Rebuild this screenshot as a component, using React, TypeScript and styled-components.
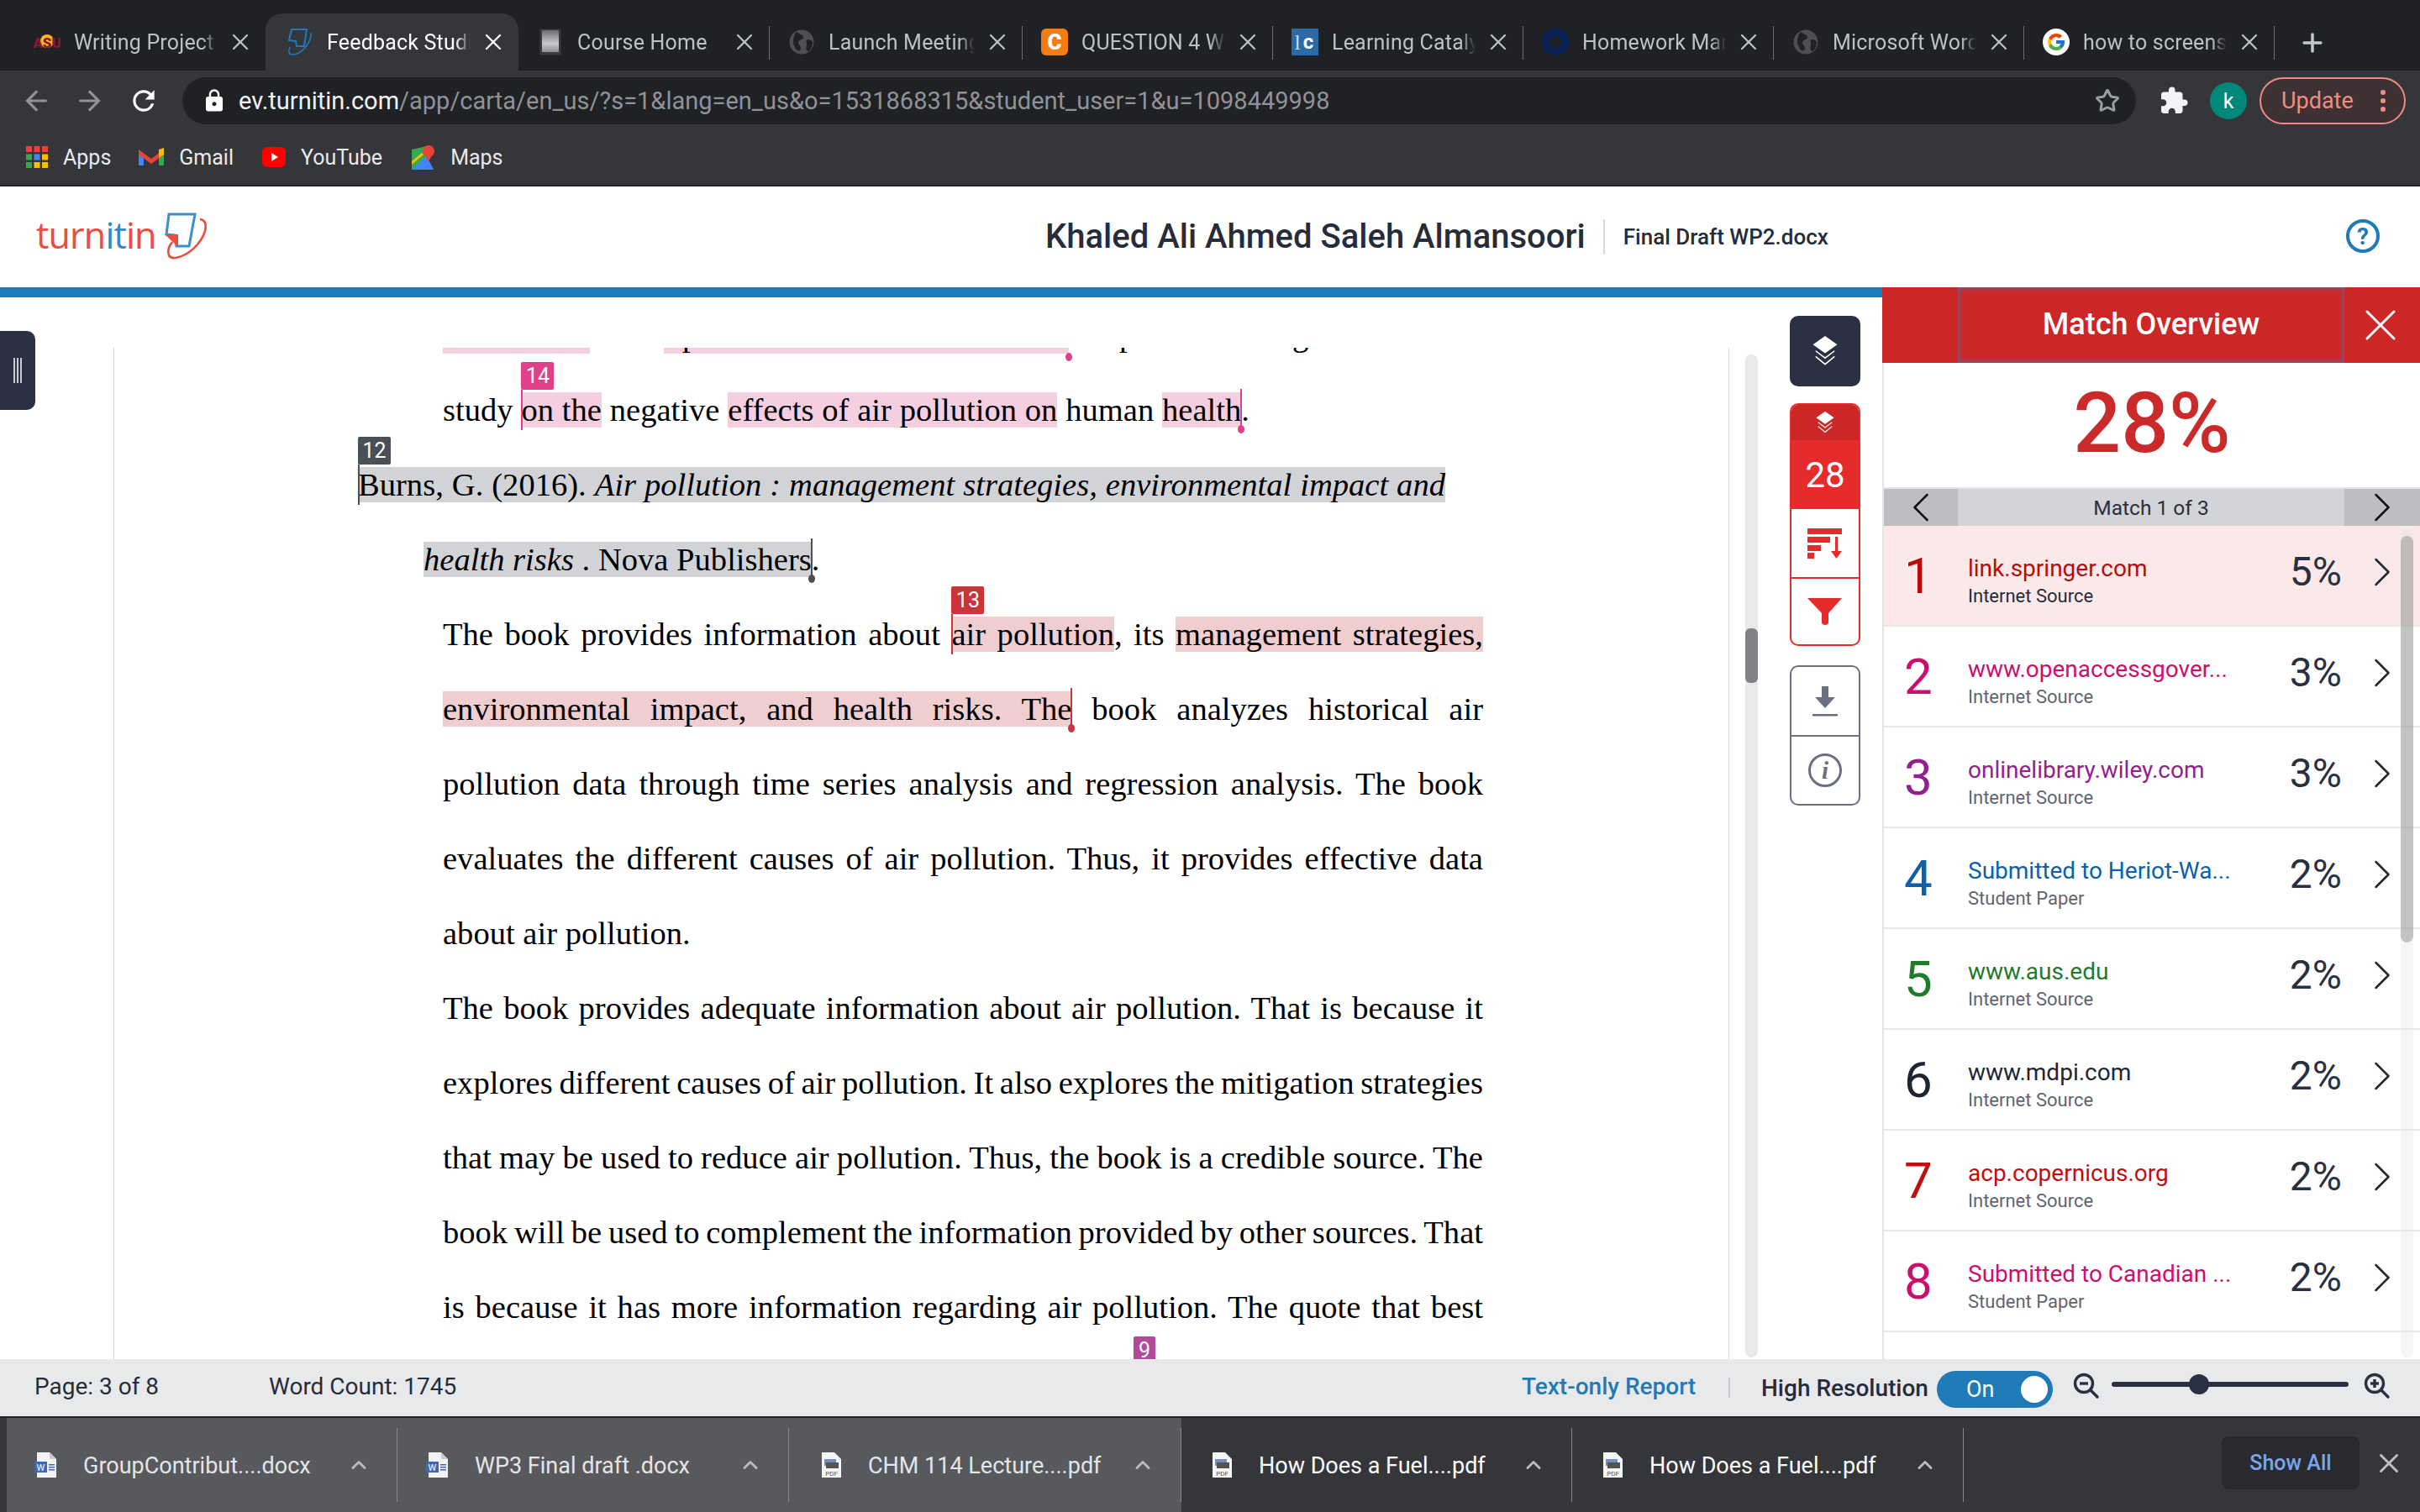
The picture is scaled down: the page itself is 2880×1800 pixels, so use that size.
import React from "react";
import styled, { createGlobalStyle } from "styled-components";
import { ChevronLeft, ChevronRight, ChevronUp, Plus, Star, X } from "lucide-react";
import { MdArrowBack, MdArrowForward, MdExtension, MdLock, MdRefresh } from "react-icons/md";
import { FcGoogle } from "react-icons/fc";

const GlobalStyle = createGlobalStyle`
    html, body {
        margin: 0;
        padding: 0;
        background: #ffffff;
    }
    * {
        box-sizing: border-box;
    }
`;

const Page = styled.div`
    width: 2880px;
    height: 1800px;
    display: flex;
    flex-direction: column;
    overflow: hidden;
    font-family: Roboto, "Liberation Sans", sans-serif;
    position: relative;
`;

/* browser chrome */
const TabStrip = styled.div`
    height: 84px;
    background: #202124;
    display: flex;
    align-items: flex-end;
    padding-left: 18px;
`;

const Tab = styled.div<{ $w?: number; $active?: boolean; $sep?: boolean }>`
    width: ${(p) => p.$w ?? 298}px;
    height: 68px;
    flex: none;
    display: flex;
    align-items: center;
    padding: 0 22px 0 ${(p) => (p.$active ? 25 : 22)}px;
    position: relative;
    color: ${(p) => (p.$active ? "#ffffff" : "#bdc1c6")};
    background: ${(p) => (p.$active ? "#35363a" : "transparent")};
    border-radius: ${(p) => (p.$active ? "20px 20px 0 0" : "0")};
    &::after {
        content: "";
        display: ${(p) => (p.$sep ? "block" : "none")};
        position: absolute;
        right: 0;
        top: 15px;
        width: 1px;
        height: 40px;
        background: #6a6c70;
    }
`;

const TabIcon = styled.div`
    width: 32px;
    height: 32px;
    flex: none;
    margin-right: 16px;
    display: flex;
    align-items: center;
    justify-content: center;
`;

const TabLabel = styled.div`
    flex: 1;
    min-width: 0;
    font-size: 25px;
    letter-spacing: 0.2px;
    white-space: nowrap;
    overflow: hidden;
    -webkit-mask-image: linear-gradient(to right, #000 84%, transparent 94%);
    mask-image: linear-gradient(to right, #000 84%, transparent 94%);
`;

const TabClose = styled(X)`
    width: 32px;
    height: 32px;
    flex: none;
    margin: 0 -8px 0 0;
`;

const NewTab = styled(Plus)`
    width: 34px;
    height: 34px;
    color: #c4c7cc;
    margin: 0 0 16px 28px;
`;

const Toolbar = styled.div`
    height: 64px;
    padding-top: 8px;
    background: #35363a;
    display: flex;
    align-items: flex-start;
`;

const NavIcons = styled.div`
    width: 217px;
    height: 56px;
    flex: none;
    display: flex;
    align-items: center;
    padding-left: 24px;
    gap: 26px;
    font-size: 38px;
    color: #909296;
    svg:last-child {
        color: #ffffff;
    }
`;

const UrlBar = styled.div`
    width: 2325px;
    height: 56px;
    flex: none;
    background: #202124;
    border-radius: 28px;
    display: flex;
    align-items: center;
    padding-left: 23px;
    font-size: 29px;
    color: #ffffff;
    svg {
        flex: none;
    }
`;

const UrlText = styled.div`
    margin-left: 14px;
    flex: 1;
    white-space: nowrap;
    color: #f1f3f4;
    span {
        color: #8f9296;
    }
`;

const StarIcon = styled(Star)`
    width: 30px;
    height: 30px;
    color: #9a9da1;
    margin-right: 19px;
`;

const ExtIcon = styled(MdExtension)`
    font-size: 36px;
    color: #f1f3f4;
    margin: 10px 0 0 27px;
    flex: none;
`;

const Avatar = styled.div`
    width: 44px;
    height: 44px;
    margin: 6px 0 0 25px;
    border-radius: 50%;
    background: #00897b;
    color: #ffffff;
    font-size: 25px;
    display: flex;
    align-items: center;
    justify-content: center;
    flex: none;
`;

const UpdatePill = styled.div`
    width: 174px;
    height: 56px;
    margin-left: 15px;
    flex: none;
    border: 2px solid #f28b82;
    border-radius: 28px;
    background: #3e3133;
    color: #f28b82;
    font-size: 27px;
    display: flex;
    align-items: center;
    padding-left: 24px;
    justify-content: space-between;
    padding-right: 22px;
`;

const Dots = styled.div`
    display: flex;
    flex-direction: column;
    gap: 4px;
    i {
        display: block;
        width: 6px;
        height: 6px;
        border-radius: 50%;
        background: #f28b82;
    }
`;

const Bookmarks = styled.div`
    height: 74px;
    background: #35363a;
    border-bottom: 2px solid #202124;
    display: flex;
    align-items: center;
    padding: 6px 0 0 31px;
    color: #e8eaed;
    font-size: 25px;
`;

const Bookmark = styled.div<{ $gap: number }>`
    display: flex;
    align-items: center;
    gap: 18px;
    margin-right: ${(p) => p.$gap}px;
`;

/* turnitin header */
const Header = styled.div`
    height: 120px;
    background: #ffffff;
    display: flex;
    align-items: center;
    position: relative;
`;

const Logo = styled.div`
    width: 1244px;
    flex: none;
    padding-left: 43px;
    display: flex;
    align-items: center;
`;

const LogoWord = styled.div`
    font-family: "Open Sans", sans-serif;
    font-size: 43px;
    font-weight: 500;
    letter-spacing: -0.8px;
    color: #ef4a3c;
    line-height: 1;
    margin-top: -6px;
    b {
        font-weight: 500;
        color: #2f8ac7;
    }
`;

const StudentName = styled.div`
    font-size: 40px;
    font-weight: 500;
    color: #262c3a;
    white-space: nowrap;
    margin-top: -2px;
`;

const PaperTitle = styled.div`
    font-size: 26px;
    font-weight: 500;
    color: #262c3a;
    margin-left: 21px;
    padding-left: 22px;
    height: 42px;
    line-height: 42px;
    border-left: 2px solid #d8dade;
`;

const HelpButton = styled.div`
    position: absolute;
    right: 48px;
    top: 39px;
    width: 40px;
    height: 40px;
    border: 4px solid #1e7bb8;
    border-radius: 50%;
    color: #1e7bb8;
    font-size: 28px;
    font-weight: 700;
    display: flex;
    align-items: center;
    justify-content: center;
`;

/* workspace */
const Workspace = styled.div`
    height: 1276px;
    display: flex;
`;

const LeftCol = styled.div`
    width: 2240px;
    flex: none;
    display: flex;
    flex-direction: column;
`;

const BlueStrip = styled.div`
    height: 12px;
    background: #1e7bb8;
    flex: none;
`;

const DocRow = styled.div`
    flex: 1;
    display: flex;
    min-height: 0;
    position: relative;
`;

const SideHandle = styled.div`
    position: absolute;
    left: 0;
    top: 40px;
    width: 42px;
    height: 94px;
    background: #2a3042;
    border-radius: 0 10px 10px 0;
    display: flex;
    justify-content: center;
    gap: 2px;
    padding: 32px 0 0 0;
    i {
        display: block;
        width: 2px;
        height: 30px;
        background: #c9ccd3;
    }
`;

const DocArea = styled.div`
    width: 2058px;
    flex: none;
    padding: 60px 0 0 135px;
`;

const DocViewport = styled.div`
    height: 100%;
    border-left: 1px solid #d5d6d9;
    border-right: 1px solid #d5d6d9;
    overflow: hidden;
    font-family: "Liberation Serif", "Times New Roman", serif;
    font-size: 38.6px;
    color: #000000;
`;

const DocScroll = styled.div`
    margin-top: -59px;
`;

const Line = styled.div<{ $x: number; $w?: number; $word?: number }>`
    height: 89px;
    line-height: 89px;
    margin-left: ${(p) => p.$x - 136}px;
    width: ${(p) => (p.$w ? `${p.$w}px` : "auto")};
    word-spacing: ${(p) => p.$word ?? 0}px;
    text-align: ${(p) => (p.$w ? "justify" : "left")};
    text-align-last: ${(p) => (p.$w ? "justify" : "left")};
`;

const NoBreak = styled.span`
    white-space: nowrap;
`;

const ClippedLine = styled.div`
    height: 89px;
    margin-left: 391px;
    display: flex;
    line-height: 89px;
`;

const ClipPiece = styled.div<{ $w: number; $pink?: boolean; $pad?: number }>`
    width: ${(p) => p.$w}px;
    height: 66px;
    flex: none;
    overflow: visible;
    padding-left: ${(p) => p.$pad ?? 0}px;
    background: ${(p) =>
        p.$pink ? "linear-gradient(#f5cfe0, #f5cfe0) left bottom / 100% 7px no-repeat" : "none"};
    position: relative;
`;

const ClipDot = styled.span`
    position: absolute;
    right: 0;
    bottom: -9px;
    width: 8px;
    height: 10px;
    margin-right: -4px;
    border-radius: 50%;
    background: #df4088;
`;

const Mark = styled.span<{ $tone: "pink" | "red" | "grey" }>`
    background: ${(p) =>
        p.$tone === "pink" ? "#f5cfe0" : p.$tone === "red" ? "#f0cdcf" : "#d1d3d6"};
    position: relative;
`;

const toneColor = { pink: "#df4088", red: "#cb343a", grey: "#4b4f57", purple: "#b04a9b" };

const Badge = styled.span<{ $tone: keyof typeof toneColor; $w?: number; $top?: number }>`
    position: absolute;
    left: 0;
    top: ${(p) => p.$top ?? -36}px;
    height: 33px;
    width: ${(p) => p.$w ?? 39}px;
    background: ${(p) => toneColor[p.$tone]};
    border-radius: 2px;
    color: #ffffff;
    font-family: Roboto, sans-serif;
    font-size: 25px;
    line-height: 33px;
    text-align: center;
    text-align-last: center;
    word-spacing: 0;
    &::after {
        content: "";
        position: absolute;
        left: 0;
        top: 33px;
        width: 2px;
        height: 48px;
        background: ${(p) => toneColor[p.$tone]};
    }
`;

const EndMark = styled.span<{ $tone: keyof typeof toneColor }>`
    display: inline-block;
    width: 0;
    height: 0;
    position: relative;
    &::before {
        content: "";
        position: absolute;
        left: -1px;
        top: -38px;
        width: 2px;
        height: 50px;
        background: ${(p) => toneColor[p.$tone]};
    }
    &::after {
        content: "";
        position: absolute;
        left: -4px;
        top: 5px;
        width: 8px;
        height: 10px;
        border-radius: 50%;
        background: ${(p) => toneColor[p.$tone]};
    }
`;

const Gutter = styled.div`
    flex: 1;
    display: flex;
    padding-left: 19px;
`;

const ScrollTrack = styled.div`
    width: 15px;
    flex: none;
    margin: 68px 0 2px;
    background: #e8e9eb;
    border-radius: 8px;
    padding-top: 326px;
`;

const ScrollThumb = styled.div`
    height: 65px;
    background: #808285;
    border-radius: 6px;
`;

const ToolColumn = styled.div`
    width: 84px;
    margin-left: 38px;
    padding-top: 22px;
    display: flex;
    flex-direction: column;
`;

const LayersButton = styled.div`
    height: 84px;
    background: #2a3042;
    border-radius: 10px;
    display: flex;
    align-items: center;
    justify-content: center;
    margin-bottom: 20px;
`;

const ToolGroup = styled.div<{ $color: string }>`
    border: 2px solid ${(p) => p.$color};
    border-radius: 10px;
    overflow: hidden;
    margin-bottom: 23px;
    background: #ffffff;
`;

const ToolCell = styled.div<{ $h: number; $bg?: string; $line?: string }>`
    height: ${(p) => p.$h}px;
    background: ${(p) => p.$bg ?? "transparent"};
    border-top: ${(p) => (p.$line ? `2px solid ${p.$line}` : "none")};
    display: flex;
    align-items: center;
    justify-content: center;
    color: #ffffff;
    font-size: 42px;
`;

/* match overview panel */
const Panel = styled.div`
    width: 640px;
    flex: none;
    display: flex;
    flex-direction: column;
    border-left: 2px solid #e4e5e7;
    position: relative;
`;

const PanelHead = styled.div`
    height: 90px;
    margin-left: -2px;
    background: #cb2727;
    flex: none;
    display: flex;
    align-items: center;
    padding-left: 90px;
`;

const PanelTitle = styled.div`
    width: 460px;
    height: 90px;
    line-height: 88px;
    text-align: center;
    color: #ffffff;
    font-size: 36px;
    font-weight: 500;
    box-shadow: inset 0 0 5px 2px rgba(80, 110, 170, 0.65);
`;

const PanelClose = styled(X)`
    width: 64px;
    height: 64px;
    color: #ffffff;
    margin-left: 11px;
    stroke-width: 1.1;
    flex: none;
`;

const BigScore = styled.div`
    height: 150px;
    flex: none;
    border-bottom: 2px solid #e4e5e7;
    text-align: center;
    color: #cb2a2a;
    font-size: 100px;
    font-weight: 500;
    line-height: 144px;
`;

const MatchNav = styled.div`
    height: 44px;
    flex: none;
    background: #d2d4d8;
    display: flex;
    align-items: center;
    color: #2a3040;
    font-size: 24.5px;
`;

const NavSide = styled.div<{ $w: number }>`
    width: ${(p) => p.$w}px;
    height: 44px;
    flex: none;
    background: #bcbec3;
    display: flex;
    align-items: center;
    justify-content: center;
    color: #111111;
    svg {
        flex: none;
    }
`;

const NavText = styled.div`
    flex: 1;
    text-align: center;
`;

const MatchList = styled.div`
    flex: 1;
    min-height: 0;
    position: relative;
    overflow: hidden;
`;

const MatchRow = styled.div<{ $active?: boolean }>`
    height: 120px;
    display: flex;
    align-items: center;
    padding: 0 35px 0 24px;
    border-bottom: 2px solid #e8e9eb;
    background: ${(p) => (p.$active ? "#fbe9e9" : "#ffffff")};
`;

const MatchNum = styled.div<{ $color: string }>`
    width: 76px;
    flex: none;
    font-size: 60px;
    color: ${(p) => p.$color};
`;

const MatchInfo = styled.div`
    flex: 1;
    min-width: 0;
    margin-top: 14px;
`;

const MatchName = styled.div<{ $color: string }>`
    font-size: 28px;
    color: ${(p) => p.$color};
    white-space: nowrap;
    line-height: 36px;
`;

const MatchType = styled.div<{ $active?: boolean }>`
    font-size: 22px;
    line-height: 30px;
    color: ${(p) => (p.$active ? "#262c3a" : "#5f6571")};
`;

const MatchPct = styled.div`
    font-size: 48px;
    color: #2a3040;
    margin-bottom: 10px;
`;

const MatchChevron = styled(ChevronRight)`
    width: 60px;
    height: 60px;
    margin: 0 -20px 8px 18px;
    color: #222733;
    stroke-width: 1;
    flex: none;
`;

const ListTrack = styled.div`
    position: absolute;
    right: 8px;
    top: 4px;
    bottom: 2px;
    width: 15px;
    border-radius: 8px;
    background: rgba(225, 225, 225, 0.35);
`;

const ListThumb = styled.div`
    position: absolute;
    right: 8px;
    top: 12px;
    height: 484px;
    width: 15px;
    border-radius: 8px;
    background: rgba(120, 120, 120, 0.4);
`;

/* status bar */
const StatusBar = styled.div`
    height: 68px;
    flex: none;
    background: #e8e9eb;
    display: flex;
    align-items: center;
    color: #262c3a;
    font-size: 28px;
    padding-left: 41px;
`;

const StatusText = styled.div<{ $w?: number }>`
    width: ${(p) => (p.$w ? `${p.$w}px` : "auto")};
    flex: none;
    white-space: nowrap;
    margin-bottom: 3px;
`;

const ReportLink = styled.div`
    margin-bottom: 3px;
    color: #1e7bb8;
    font-weight: 500;
    font-size: 28px;
    width: 246px;
    flex: none;
    white-space: nowrap;
`;

const StatusDivider = styled.div`
    width: 2px;
    height: 24px;
    background: #c8cacd;
    margin-right: 37px;
    flex: none;
`;

const StatusStrong = styled.div`
    font-weight: 500;
    font-size: 28px;
    width: 209px;
    flex: none;
    white-space: nowrap;
    margin-top: 1px;
`;

const Toggle = styled.div`
    width: 138px;
    height: 44px;
    flex: none;
    margin-top: 4px;
    background: #1e7bb8;
    border-radius: 22px;
    display: flex;
    align-items: center;
    color: #ffffff;
    font-size: 27px;
    padding: 0 6px 0 35px;
    justify-content: space-between;
`;

const ToggleKnob = styled.div`
    width: 32px;
    height: 32px;
    border-radius: 50%;
    background: #ffffff;
`;

const ZoomGap = styled.div`
    width: 24px;
    flex: none;
`;

const ZoomSlider = styled.div`
    width: 282px;
    height: 6px;
    border-radius: 3px;
    background: #2a3042;
    margin: -8px 18px 0 14px;
    flex: none;
    position: relative;
`;

const ZoomKnob = styled.div`
    position: absolute;
    left: 92px;
    top: -9px;
    width: 24px;
    height: 24px;
    border-radius: 50%;
    background: #2a3042;
`;

const ZoomGlyph = styled.svg`
    flex: none;
    margin-top: -4px;
`;

/* downloads shelf */
const Shelf = styled.div`
    height: 114px;
    flex: none;
    background: #35363a;
    border-top: 2px solid #202124;
    display: flex;
    padding-left: 8px;
    position: relative;
`;

const ShelfItem = styled.div<{ $hover?: boolean; $w: number; $pad: number }>`
    width: ${(p) => p.$w}px;
    flex: none;
    height: 112px;
    background: ${(p) => (p.$hover ? "#58595d" : "transparent")};
    display: flex;
    align-items: center;
    padding-left: ${(p) => p.$pad}px;
    position: relative;
    color: ${(p) => (p.$hover ? "#e4e5e7" : "#ffffff")};
    font-size: 27px;
    &::after {
        content: "";
        position: absolute;
        right: 0;
        top: 12px;
        width: 1px;
        height: 88px;
        background: #86878b;
    }
`;

const ShelfName = styled.div`
    margin: 2px 0 0 31px;
    flex: 1;
    white-space: nowrap;
`;

const ShelfCaret = styled(ChevronUp)`
    width: 28px;
    height: 28px;
    color: #b9babd;
    margin-right: 32px;
    flex: none;
`;

const ShowAll = styled.div`
    position: absolute;
    left: 2644px;
    top: 22px;
    width: 164px;
    height: 63px;
    background: #292a2d;
    border-radius: 8px;
    color: #7ba6ee;
    font-size: 25px;
    font-weight: 500;
    display: flex;
    align-items: center;
    justify-content: center;
`;

const ShelfClose = styled(X)`
    position: absolute;
    left: 2824px;
    top: 35px;
    width: 38px;
    height: 38px;
    color: #bfc0c2;
`;

const Globe = () => (
    <svg width="30" height="30" viewBox="0 0 30 30">
        <circle cx="15" cy="15" r="14.5" fill="#4d4f54" />
        <path d="M9 3c4 3 7 3 8 6s-5 3-6 6 3 4 3 7-2 4-4 3-5-6-5-11 2-9 4-11zM22 12c3 0 5 1 6 3 0 5-2 9-5 11-3-1-3-4-2-7s-2-5 1-7z" fill="#202124" />
    </svg>
);

const tabs: { label: string; w?: number; icon: React.ReactNode; sep?: boolean; active?: boolean }[] = [
    {
        label: "Writing Project",
        icon: (
            <svg width="32" height="20" viewBox="0 0 32 20">
                <circle cx="16" cy="9" r="8" fill="#f5b81c" />
                <text x="16" y="17" textAnchor="middle" fontFamily="Roboto" fontWeight="900" fontSize="17" fill="#8a1538">
                    ASU
                </text>
            </svg>
        ),
    },
    {
        label: "Feedback Studio",
        w: 301,
        active: true,
        icon: (
            <svg width="32" height="34" viewBox="0 0 32 34" fill="none" stroke="#1e7bb8" strokeWidth="2">
                <path d="M6 2h18l-3 20h-9l-1-6-8-1z" />
                <path d="M29 6c1 12-12 26-22 26-5 0-5-5-3-9" strokeWidth="1.5" />
            </svg>
        ),
    },
    {
        label: "Course Home",
        w: 299,
        sep: true,
        icon: (
            <svg width="26" height="32" viewBox="0 0 26 32">
                <defs>
                    <linearGradient id="courseFav" x1="0" y1="0" x2="0" y2="1">
                        <stop offset="0" stopColor="#6b6c6e" />
                        <stop offset="0.6" stopColor="#c9cacb" />
                        <stop offset="1" stopColor="#8c8d8f" />
                    </linearGradient>
                </defs>
                <rect x="0.5" y="0.5" width="25" height="31" fill="#3a3a3c" />
                <rect x="3" y="2" width="20" height="26" fill="url(#courseFav)" />
            </svg>
        ),
    },
    { label: "Launch Meeting", w: 301, sep: true, icon: <Globe /> },
    {
        label: "QUESTION 4 Write",
        sep: true,
        icon: (
            <svg width="32" height="32" viewBox="0 0 32 32">
                <rect width="32" height="32" rx="6" fill="#f57c14" />
                <text x="16" y="25" textAnchor="middle" fontFamily="Roboto" fontWeight="900" fontSize="26" fill="#ffffff">
                    C
                </text>
            </svg>
        ),
    },
    {
        label: "Learning Catalyst",
        sep: true,
        icon: (
            <svg width="32" height="32" viewBox="0 0 32 32">
                <rect width="32" height="32" fill="#2a6aa6" />
                <text x="7" y="25" textAnchor="middle" fontFamily="Liberation Serif" fontSize="26" fill="#c6dbee">
                    l
                </text>
                <text x="20" y="24" textAnchor="middle" fontFamily="Roboto" fontWeight="700" fontSize="24" fill="#ffffff">
                    c
                </text>
            </svg>
        ),
    },
    {
        label: "Homework Market",
        sep: true,
        icon: (
            <svg width="32" height="32" viewBox="0 0 32 32">
                <circle cx="16" cy="16" r="16" fill="#0b2257" />
                <path d="M16 8l9 8-9 8-9-8z" fill="#202124" />
            </svg>
        ),
    },
    { label: "Microsoft Word", sep: true, icon: <Globe /> },
    {
        label: "how to screenshot",
        sep: true,
        icon: (
            <svg width="32" height="32" viewBox="0 0 32 32">
                <circle cx="16" cy="16" r="16" fill="#ffffff" />
                <foreignObject x="4" y="4" width="24" height="24">
                    <FcGoogle size={24} />
                </foreignObject>
            </svg>
        ),
    },
];

const matches = [
    { n: 1, name: "link.springer.com", type: "Internet Source", pct: "5%", color: "#b80c0c" },
    { n: 2, name: "www.openaccessgover...", type: "Internet Source", pct: "3%", color: "#cc0f6c" },
    { n: 3, name: "onlinelibrary.wiley.com", type: "Internet Source", pct: "3%", color: "#93208f" },
    { n: 4, name: "Submitted to Heriot-Wa...", type: "Student Paper", pct: "2%", color: "#0d5fa8" },
    { n: 5, name: "www.aus.edu", type: "Internet Source", pct: "2%", color: "#1f7a2c" },
    { n: 6, name: "www.mdpi.com", type: "Internet Source", pct: "2%", color: "#1f2633" },
    { n: 7, name: "acp.copernicus.org", type: "Internet Source", pct: "2%", color: "#c20d0d" },
    { n: 8, name: "Submitted to Canadian ...", type: "Student Paper", pct: "2%", color: "#cc0f6c" },
];

const downloads = [
    { name: "GroupContribut....docx", kind: "doc", w: 465, pad: 33, hover: true },
    { name: "WP3 Final draft .docx", kind: "doc", w: 466, pad: 34, hover: true },
    { name: "CHM 114 Lecture....pdf", kind: "pdf", w: 467, pad: 38, hover: true },
    { name: "How Does a Fuel....pdf", kind: "pdf", w: 465, pad: 36 },
    { name: "How Does a Fuel....pdf", kind: "pdf", w: 466, pad: 36 },
];

const FileIcon = ({ kind }: { kind: string }) =>
    kind === "doc" ? (
        <svg width="27" height="30" viewBox="0 0 27 30">
            <path d="M3 0h15l8 8v22H3z" fill="#f2f3f5" />
            <path d="M18 0l8 8h-8z" fill="#c9cbd0" />
            <rect x="0" y="11" width="15" height="13" fill="#3f67b8" />
            <text x="7.5" y="22" textAnchor="middle" fontSize="11" fontFamily="Roboto" fill="#ffffff">
                W
            </text>
            <path d="M17 14h7v1.5h-7zM17 17h7v1.5h-7zM17 20h7v1.5h-7z" fill="#3f67b8" />
        </svg>
    ) : (
        <svg width="25" height="30" viewBox="0 0 25 30">
            <path d="M1 0h15l8 8v22H1z" fill="#f5f5f5" />
            <path d="M4 8h14v8H4z" fill="#6e8fc2" />
            <path d="M6 12h15v7H6z" fill="#59524d" />
            <text x="12.5" y="28" textAnchor="middle" fontSize="8" fontFamily="Roboto" fill="#555555">
                PDF
            </text>
        </svg>
    );

const LayersIcon = ({ size }: { size: number }) => (
    <svg width={size} height={size * 1.25} viewBox="0 0 32 40" fill="none" stroke="#ffffff" strokeWidth="1.6">
        <path d="M16 2l14 10-14 10L2 12z" fill="#ffffff" />
        <path d="M4 20l12 9 12-9" />
        <path d="M4 27l12 10 12-10" />
    </svg>
);

const ZoomIcon = ({ plus }: { plus?: boolean }) => (
    <ZoomGlyph width="32" height="32" viewBox="0 0 32 32" fill="none" stroke="#2a3042" strokeWidth="3.4">
        <circle cx="13" cy="13" r="10.5" />
        <path d="M21 21l8 8" strokeLinecap="round" />
        <path d="M8 13h10" />
        {plus && <path d="M13 8v10" />}
    </ZoomGlyph>
);

const App: React.FC = (): JSX.Element => {
    return (
        <Page>
            <GlobalStyle />
            <TabStrip>
                {tabs.map((t) => (
                    <Tab key={t.label} $w={t.w} $active={t.active} $sep={t.sep}>
                        <TabIcon>{t.icon}</TabIcon>
                        <TabLabel>{t.label}</TabLabel>
                        <TabClose strokeWidth={1.7} />
                    </Tab>
                ))}
                <NewTab strokeWidth={2.5} />
            </TabStrip>
            <Toolbar>
                <NavIcons>
                    <MdArrowBack />
                    <MdArrowForward />
                    <MdRefresh />
                </NavIcons>
                <UrlBar>
                    <MdLock size={30} />
                    <UrlText>
                        ev.turnitin.com
                        <span>/app/carta/en_us/?s=1&amp;lang=en_us&amp;o=1531868315&amp;student_user=1&amp;u=1098449998</span>
                    </UrlText>
                    <StarIcon strokeWidth={2.4} />
                </UrlBar>
                <ExtIcon />
                <Avatar>k</Avatar>
                <UpdatePill>
                    Update
                    <Dots>
                        <i />
                        <i />
                        <i />
                    </Dots>
                </UpdatePill>
            </Toolbar>
            <Bookmarks>
                <Bookmark $gap={33}>
                    <svg width="26" height="26" viewBox="0 0 26 26">
                        {["#ea4335", "#ea4335", "#ea4335", "#34a853", "#4285f4", "#fbbc04", "#34a853", "#fbbc04", "#fbbc04"].map((c, i) => (
                            <rect key={i} x={(i % 3) * 9.5} y={Math.floor(i / 3) * 9.5} width="7" height="7" fill={c} />
                        ))}
                    </svg>
                    Apps
                </Bookmark>
                <Bookmark $gap={34}>
                    <svg width="30" height="24" viewBox="0 0 30 24">
                        <path d="M0 3v19h6V9z" fill="#4285f4" />
                        <path d="M30 3v19h-6V9z" fill="#34a853" />
                        <path d="M0 3l15 11L30 3v6L15 20 0 9z" fill="#ea4335" />
                        <path d="M24 3l6-2v8l-6 4z" fill="#fbbc04" />
                    </svg>
                    Gmail
                </Bookmark>
                <Bookmark $gap={35}>
                    <svg width="28" height="24" viewBox="0 0 28 24">
                        <rect width="28" height="24" rx="6" fill="#ff0000" />
                        <path d="M11 7l8 5-8 5z" fill="#ffffff" />
                    </svg>
                    YouTube
                </Bookmark>
                <Bookmark $gap={0}>
                    <svg width="28" height="30" viewBox="0 0 28 30">
                        <path d="M0 6l18-4v24L0 30z" fill="#34a853" />
                        <path d="M0 30l18-16 8 16z" fill="#4285f4" />
                        <path d="M0 24L14 12l-2-2L0 20z" fill="#fbbc04" />
                        <circle cx="20" cy="8" r="7" fill="#ea4335" />
                        <path d="M15 11l5 9 5-9z" fill="#ea4335" />
                    </svg>
                    Maps
                </Bookmark>
            </Bookmarks>
            <Header>
                <Logo>
                    <LogoWord>
                        turn<b>it</b>in
                    </LogoWord>
                    <svg width="60" height="60" viewBox="0 0 56 60" fill="none" style={{ marginLeft: 6, marginTop: 2 }}>
                        <path d="M7 2h31l-7 38H16l-2-13-10-1z" stroke="#3b8fcb" strokeWidth="3" />
                        <path d="M44 8c9 1 10 14-3 30-12 14-30 20-34 13-2-5 0-11 4-16" stroke="#ef4a3c" strokeWidth="2.6" />
                        <path d="M2 26h16v15z" fill="#ef4a3c" />
                    </svg>
                </Logo>
                <StudentName>Khaled Ali Ahmed Saleh Almansoori</StudentName>
                <PaperTitle>Final Draft WP2.docx</PaperTitle>
                <HelpButton>?</HelpButton>
            </Header>
            <Workspace>
                <LeftCol>
                    <BlueStrip />
                    <DocRow>
                        <SideHandle>
                            <i />
                            <i />
                            <i />
                        </SideHandle>
                        <DocArea>
                            <DocViewport>
                                <DocScroll>
                                    <ClippedLine>
                                        <ClipPiece $w={175} $pink />
                                        <ClipPiece $w={88} />
                                        <ClipPiece $w={482} $pink $pad={22}>
                                            p
                                            <ClipDot />
                                        </ClipPiece>
                                        <ClipPiece $w={266} $pad={60}>p</ClipPiece>
                                        <ClipPiece $w={100}>g</ClipPiece>
                                    </ClippedLine>
                                    <Line $x={527} $w={960} $word={-1}>
                                        study{" "}
                                        <Mark $tone="pink">
                                            <Badge $tone="pink">14</Badge>on the
                                        </Mark>{" "}
                                        negative <Mark $tone="pink">effects of air pollution on</Mark> human{" "}
                                        <NoBreak>
                                            <Mark $tone="pink">health</Mark>
                                            <EndMark $tone="pink" />.
                                        </NoBreak>
                                    </Line>
                                    <Line $x={426} $w={1294} $word={-3}>
                                        <Mark $tone="grey">
                                            <Badge $tone="grey">12</Badge>Burns, G. (2016).{" "}
                                            <em>Air pollution : management strategies, environmental impact and</em>
                                        </Mark>
                                    </Line>
                                    <Line $x={504}>
                                        <Mark $tone="grey">
                                            <em>health risks</em> . Nova Publishers
                                        </Mark>
                                        <EndMark $tone="grey" />.
                                    </Line>
                                    <Line $x={527} $w={1238}>
                                        The book provides information about{" "}
                                        <Mark $tone="red">
                                            <Badge $tone="red">13</Badge>air pollution
                                        </Mark>
                                        , its <Mark $tone="red">management strategies,</Mark>
                                    </Line>
                                    <Line $x={527} $w={1238}>
                                        <Mark $tone="red">environmental impact, and health risks. The</Mark>
                                        <EndMark $tone="red" /> book analyzes historical air
                                    </Line>
                                    <Line $x={527} $w={1238}>
                                        pollution data through time series analysis and regression analysis. The book
                                    </Line>
                                    <Line $x={527} $w={1238}>
                                        evaluates the different causes of air pollution. Thus, it provides effective data
                                    </Line>
                                    <Line $x={527}>about air pollution.</Line>
                                    <Line $x={527} $w={1238}>
                                        The book provides adequate information about air pollution. That is because it
                                    </Line>
                                    <Line $x={527} $w={1238} $word={-5}>
                                        explores different causes of air pollution. It also explores the mitigation strategies
                                    </Line>
                                    <Line $x={527} $w={1238} $word={-3}>
                                        that may be used to reduce air pollution. Thus, the book is a credible source. The
                                    </Line>
                                    <Line $x={527} $w={1238} $word={-3}>
                                        book will be used to complement the information provided by other sources. That
                                    </Line>
                                    <Line $x={527} $w={1238}>
                                        is because it has more information regarding air pollution. The quote that best
                                    </Line>
                                    <Line $x={1349}>
                                        <Mark $tone="pink">
                                            <Badge $tone="purple" $w={26} $top={-33}>9</Badge>
                                            {"\u00a0"}
                                        </Mark>
                                    </Line>
                                </DocScroll>
                            </DocViewport>
                        </DocArea>
                        <Gutter>
                            <ScrollTrack>
                                <ScrollThumb />
                            </ScrollTrack>
                            <ToolColumn>
                                <LayersButton>
                                    <LayersIcon size={30} />
                                </LayersButton>
                                <ToolGroup $color="#e52b2b">
                                    <ToolCell $h={42} $bg="#cb2727">
                                        <LayersIcon size={22} />
                                    </ToolCell>
                                    <ToolCell $h={82} $bg="#e52b2b">28</ToolCell>
                                    <ToolCell $h={81}>
                                        <svg width="42" height="36" viewBox="0 0 42 36" fill="#e52b2b">
                                            <path d="M0 0h41v7H0zM0 10h27v7H0zM0 20h16v7H0zM0 29h8v7H0z" />
                                            <path d="M33 10h3v17h5l-6.500 9L28 27h5z" />
                                        </svg>
                                    </ToolCell>
                                    <ToolCell $h={80} $line="#e52b2b">
                                        <svg width="42" height="32" viewBox="0 0 42 32" fill="#e52b2b">
                                            <path d="M0 0h41L25 18v11c0 4-8 4-8 0V18z" />
                                        </svg>
                                    </ToolCell>
                                </ToolGroup>
                                <ToolGroup $color="#6b7080">
                                    <ToolCell $h={81}>
                                        <svg width="32" height="36" viewBox="0 0 32 36" fill="#6b7080">
                                            <path d="M12 0h8v13h8L16 26 4 13h8z" />
                                            <path d="M1 33h30v2.500H1z" />
                                        </svg>
                                    </ToolCell>
                                    <ToolCell $h={82} $line="#6b7080">
                                        <svg width="42" height="42" viewBox="0 0 42 42">
                                            <circle cx="21" cy="21" r="18.500" fill="none" stroke="#6b7080" strokeWidth="3" />
                                            <text x="21" y="31" textAnchor="middle" fontFamily="Liberation Serif" fontStyle="italic" fontWeight="700" fontSize="29" fill="#6b7080">
                                                i
                                            </text>
                                        </svg>
                                    </ToolCell>
                                </ToolGroup>
                            </ToolColumn>
                        </Gutter>
                    </DocRow>
                </LeftCol>
                <Panel>
                    <PanelHead>
                        <PanelTitle>Match Overview</PanelTitle>
                        <PanelClose />
                    </PanelHead>
                    <BigScore>28%</BigScore>
                    <MatchNav>
                        <NavSide $w={88}>
                            <ChevronLeft size={60} strokeWidth={1} />
                        </NavSide>
                        <NavText>Match 1 of 3</NavText>
                        <NavSide $w={90}>
                            <ChevronRight size={60} strokeWidth={1} />
                        </NavSide>
                    </MatchNav>
                    <MatchList>
                        {matches.map((m) => (
                            <MatchRow key={m.n} $active={m.n === 1}>
                                <MatchNum $color={m.color}>{m.n}</MatchNum>
                                <MatchInfo>
                                    <MatchName $color={m.color}>{m.name}</MatchName>
                                    <MatchType $active={m.n === 1}>{m.type}</MatchType>
                                </MatchInfo>
                                <MatchPct>{m.pct}</MatchPct>
                                <MatchChevron />
                            </MatchRow>
                        ))}
                        <ListTrack />
                        <ListThumb />
                    </MatchList>
                </Panel>
            </Workspace>
            <StatusBar>
                <StatusText $w={279}>Page: 3 of 8</StatusText>
                <StatusText $w={1491}>Word Count: 1745</StatusText>
                <ReportLink>Text-only Report</ReportLink>
                <StatusDivider />
                <StatusStrong>High Resolution</StatusStrong>
                <Toggle>
                    On
                    <ToggleKnob />
                </Toggle>
                <ZoomGap />
                <ZoomIcon />
                <ZoomSlider>
                    <ZoomKnob />
                </ZoomSlider>
                <ZoomIcon plus />
            </StatusBar>
            <Shelf>
                {downloads.map((d, i) => (
                    <ShelfItem key={i} $hover={d.hover} $w={d.w} $pad={d.pad}>
                        <FileIcon kind={d.kind} />
                        <ShelfName>{d.name}</ShelfName>
                        <ShelfCaret strokeWidth={2.5} />
                    </ShelfItem>
                ))}
                <ShowAll>Show All</ShowAll>
                <ShelfClose strokeWidth={1.8} />
            </Shelf>
        </Page>
    );
};

export default App;
